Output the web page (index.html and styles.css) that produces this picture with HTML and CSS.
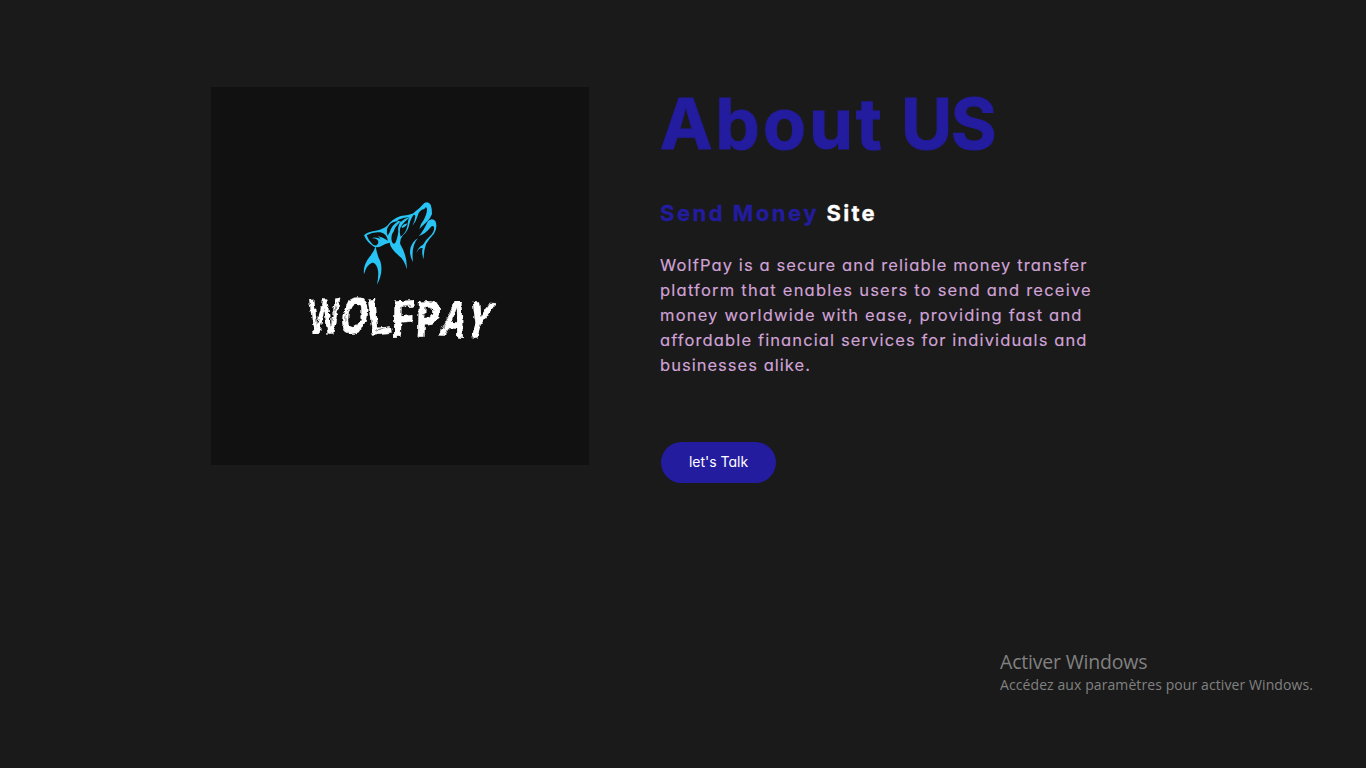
FILE: index.html
```html
<!DOCTYPE html>
<html lang="en">
<head>
<meta charset="utf-8">
<title>About US</title>
<link rel="stylesheet" href="styles.css">
</head>
<body>
<section class="about">
  <div class="picture">
    <svg class="logo" viewBox="0 0 378 378" role="img" aria-label="WolfPay">
      <filter id="rough" x="-5%" y="-10%" width="110%" height="120%">
        <feTurbulence type="fractalNoise" baseFrequency=".22" numOctaves="2" seed="4"/>
        <feDisplacementMap in="SourceGraphic" scale="4.500" xChannelSelector="R" yChannelSelector="G"/>
      </filter>
      <g transform="translate(144 108) scale(.33333)">
        <g class="wolf">
          <path d="M27 121Q36 110 62 107Q84 103 96 93Q114 70 137 63Q160 61 181 53Q167 68 163 88Q160 108 144 121Q133 135 136 148Q158 185 155 223Q150 196 130 181Q106 159 104 143Q91 145 78 154Q68 159 57 155Q36 143 27 121Z"/>
          <path d="M178 52Q196 38 208 24Q220 17 227 29Q232 43 231 57Q226 70 218 78Q207 88 193 102Q196 87 206 75Q216 57 216 43Q214 31 208 42Q192 45 188 62Q184 78 172 93Q180 78 181 64Q181 56 172 61Z"/>
          <path d="M219 78Q232 68 241 78Q249 95 237 116Q223 130 213 148Q206 168 206 193Q199 174 203 159Q190 158 184 175Q188 157 204 149Q214 132 226 122Q239 109 237 96Q232 89 225 99Q214 114 191 124Q205 109 219 78Z"/>
          <path d="M62 154Q66 181 76 199Q86 231 66 269Q73 235 67 218Q61 202 51 203Q33 211 27 238Q23 211 45 184Q57 170 62 154Z"/>
          <path d="M189 130Q168 151 174 202Q161 178 167 157Q174 138 189 130Z"/>
        </g>
        <g class="hollow">
          <path d="M35 121Q55 109 76 112Q95 116 99 137Q83 127 68 123Q82 134 77 145Q66 155 54 149Q40 137 35 121Z"/>
          <path d="M98 122Q91 105 103 90Q112 79 130 79Q111 89 104 112Z"/>
          <path d="M111 141Q105 124 117 107Q120 95 136 80Q127 96 130 110Q127 132 121 143Q116 150 111 141Z"/>
          <path d="M137 125Q130 105 141 90Q149 80 162 69Q158 77 157 94Q152 116 137 125Z"/>
          <path d="M126 76Q145 67 164 66Q147 71 138 80Z"/>
        </g>
        <path class="wolf" d="M50 130Q66 123 84 138Q79 150 63 151Q75 144 67 134Q60 129 50 130ZM139 95Q147 86 158 85Q153 95 143 99Z"/>
      </g>
      <g filter="url(#rough)">
        <g class="wordmark">
          <text transform="translate(97 247) rotate(-1) skewX(-3)" textLength="31" lengthAdjust="spacingAndGlyphs">W</text>
          <text transform="translate(127 246) skewX(-9)" textLength="28" lengthAdjust="spacingAndGlyphs">O</text>
          <text transform="translate(157 248) rotate(-6)" textLength="25" lengthAdjust="spacingAndGlyphs">L</text>
          <text transform="translate(179 250) rotate(-4) skewX(-5)" textLength="25" lengthAdjust="spacingAndGlyphs">F</text>
          <text transform="translate(203 250) rotate(-2) skewX(-4)" textLength="27" lengthAdjust="spacingAndGlyphs">P</text>
          <text transform="translate(228 248) rotate(7) skewX(-5)" textLength="24" lengthAdjust="spacingAndGlyphs">A</text>
          <text transform="translate(252 250) rotate(2) skewX(-14)" textLength="23" lengthAdjust="spacingAndGlyphs">Y</text>
        </g>
        <path class="scratches" d="M104 235l7-17M120 238l6-23M135 234q-1-8 4-13M151 222q1 8-5 15M166 244l14-4M192 219l9-1M211 228l13-5M232 241l9-19M270 226l8-11"/>
      </g>
    </svg>
  </div>
  <div class="info">
    <h1>About <span class="us">US</span></h1>
    <h2><span class="accent">Send Money</span> Site</h2>
    <p>
      <span class="l1">WolfPay is a secure and reliable money transfer</span><br>
      <span class="l2">platform that enables users to send and receive</span><br>
      <span class="l3">money worldwide with ease, providing fast and</span><br>
      <span class="l4">affordable financial services for individuals and</span><br>
      <span class="l5">businesses alike.</span>
    </p>
    <a class="talk" href="#">let's Talk</a>
  </div>
</section>
<aside class="activation">Activer Windows<small>Accédez aux paramètres pour activer Windows.</small></aside>
</body>
</html>
```
FILE: styles.css
```css
* { box-sizing: border-box; }
body {
  margin: 0;
  height: 768px;
  overflow: hidden;
  background: #1a1a1a;
  font-family: Inter, "Open Sans", sans-serif;
  font-feature-settings: "cv11";
}
.about { display: flex; gap: 71px; padding: 87px 0 0 211px; }
.picture { width: 378px; height: 378px; background: #111; }
.logo { display: block; width: 378px; height: 378px; }
.wolf { fill: #27c4f5; }
.hollow { fill: #111; }
.wordmark { fill: #fff; stroke: #fff; stroke-width: .3; font: 700 49px "Open Sans", sans-serif; }
.scratches { fill: none; stroke: #111; stroke-width: .7; stroke-dasharray: 7 2 3 1; opacity: .7; }
.info { width: 460px; }
h1 { margin: 0; font-size: 70px; line-height: 74px; font-weight: 700; letter-spacing: 3.3px; word-spacing: -4px; color: #231c9f; -webkit-text-stroke: 1.2px #231c9f; white-space: nowrap; }
.us { letter-spacing: -1.5px; }
h2 { margin: 36px 0 0; font-size: 22px; line-height: 32px; font-weight: 700; letter-spacing: 2.3px; color: #fff; -webkit-text-stroke: .3px; }
.accent { color: #231c9f; letter-spacing: 2.5px; }
p { margin: 24px 0 0; font-size: 16.5px; line-height: 25px; color: #d1a3d8; white-space: nowrap; -webkit-text-stroke: .15px; }
.l1 { letter-spacing: 1.12px; }
.l2 { letter-spacing: 1.23px; }
.l3 { letter-spacing: 1.18px; }
.l4 { letter-spacing: 1.12px; }
.l5 { letter-spacing: 1.03px; }
.talk { display: flex; align-items: center; justify-content: center; margin: 64px 0 0 1px; padding-bottom: 2px; width: 115px; height: 41px; border-radius: 21px; background: #231c9f; color: #fff; font-size: 14px; text-decoration: none; }
.activation { position: absolute; left: 1000px; top: 650px; color: #818181; font-family: "Open Sans", sans-serif; font-size: 19.5px; letter-spacing: -.2px; line-height: 24px; white-space: nowrap; }
.activation small { display: block; font-size: 14px; letter-spacing: .09px; line-height: 22px; }
```
